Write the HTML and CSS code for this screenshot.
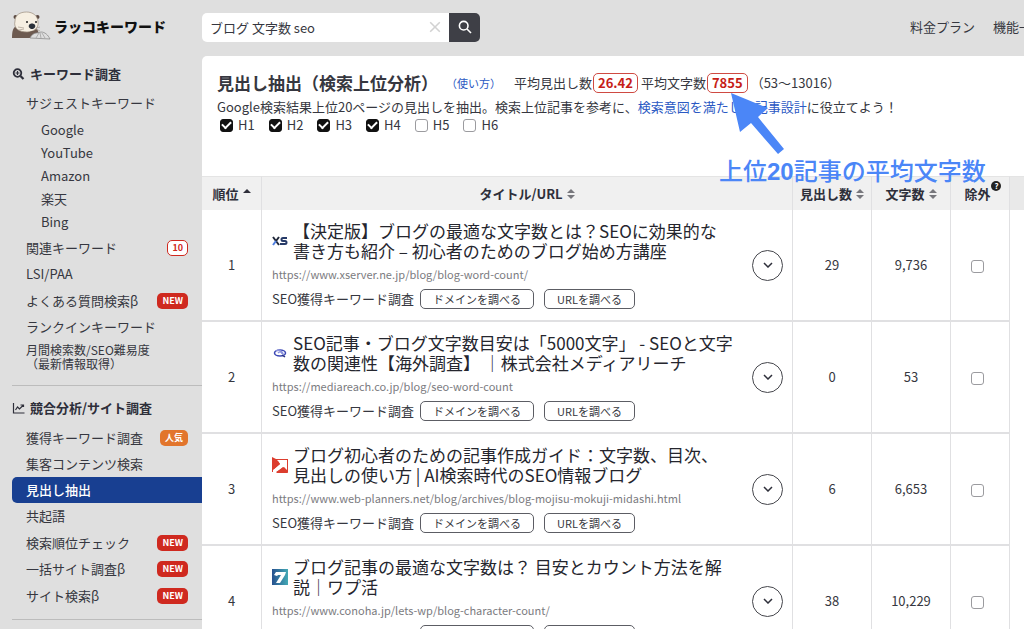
FILE: index.html
```html
<!DOCTYPE html>
<html lang="ja">
<head>
    <meta charset="UTF-8">
    <meta name="viewport" content="width=device-width, initial-scale=1.0">
    <title>見出し抽出 | ラッコキーワード</title>
    <link rel="stylesheet" href="styles.css">
</head>
<body>
    <header class="header">
        <a href="#" class="logo">
            <svg class="logo-icon" viewBox="0 0 40 30" aria-hidden="true">
                <path d="M1 27c0-7 1-11 5-12l18 1c3 2 5 8 4 11z" fill="#6d5a50"/>
                <circle cx="4.500" cy="6" r="2" fill="#5b4a42"/>
                <circle cx="26.500" cy="6" r="2" fill="#5b4a42"/>
                <path d="M4 10C4 4 9 1 15.500 1S27 5 27 11c1 6-4 10-11 10S2 18 4 10z" fill="#f6efe2" stroke="#9b8c7d" stroke-width=".7"/>
                <circle cx="16" cy="11" r="1" fill="#222"/>
                <circle cx="25" cy="11" r="1" fill="#222"/>
                <path d="M18 14c1-2 5-2 6 0s-1 4-3 4-4-2-3-4z" fill="#2b3038"/>
                <path d="M7 16l6 1M8 19l5-1M25 17l4-1M25 18l4 2" stroke="#a99c90" stroke-width=".7"/>
                <path d="M17 22c4-3 7-2 9-1l-2 4-5 1z" fill="#6d5a50"/>
                <path d="M19 27c2-4 5-5 7-5l4-1c4 0 7 3 9 7z" fill="#dedede" stroke="#8d8d8d" stroke-width=".8"/>
                <path d="M25 27l3-5M30 27l-1-5M34 27l-3-5" stroke="#999" stroke-width=".7"/>
            </svg>
            <span>ラッコキーワード</span>
        </a>
        <form class="search">
            <div class="search-box">
                <input type="text" class="search-input" value="ブログ 文字数 seo" aria-label="キーワード">
                <button type="reset" class="search-clear" aria-label="クリア">
                    <svg viewBox="0 0 10 10"><path d="M1 1l8 8M9 1L1 9" stroke="#d2d2d2" stroke-width="1.300"/></svg>
                </button>
            </div>
            <button type="submit" class="search-button" aria-label="検索">
                <svg viewBox="0 0 14 14" fill="none" stroke="#fff" stroke-width="1.600"><circle cx="5.700" cy="5.700" r="4.300"/><path d="M9 9l4 4"/></svg>
            </button>
        </form>
        <nav class="header-nav">
            <a href="#">料金プラン</a>
            <a href="#">機能一覧</a>
        </nav>
    </header>

    <div class="layout">
        <aside class="sidebar">
            <section class="menu">
                <h2 class="menu-title">
                    <svg viewBox="0 0 12 12" fill="none" stroke="#2e2f3a"><circle cx="5" cy="5" r="3.800" stroke-width="1.800"/><path d="M8 8l3 3" stroke-width="2.200"/><path d="M3 5h4M5 3v4" stroke-width="1.200"/></svg>
                    キーワード調査
                </h2>
                <ul>
                    <li>
                        <a href="#" class="item">サジェストキーワード</a>
                        <ul class="submenu">
                            <li><a href="#" class="item sub">Google</a></li>
                            <li><a href="#" class="item sub">YouTube</a></li>
                            <li><a href="#" class="item sub">Amazon</a></li>
                            <li><a href="#" class="item sub">楽天</a></li>
                            <li><a href="#" class="item sub">Bing</a></li>
                        </ul>
                    </li>
                    <li><a href="#" class="item">関連キーワード<span class="badge count">10</span></a></li>
                    <li><a href="#" class="item">LSI/PAA</a></li>
                    <li><a href="#" class="item tall">よくある質問検索β<span class="badge">NEW</span></a></li>
                    <li><a href="#" class="item">ランクインキーワード</a></li>
                    <li><a href="#" class="item small">月間検索数/SEO難易度<br>（最新情報取得）</a></li>
                </ul>
            </section>
            <section class="menu">
                <h2 class="menu-title">
                    <svg viewBox="0 0 12 12" fill="none" stroke="#2e2f3a" stroke-width="1.200"><path d="M1 1v10h11M3 8l2-3 2 2 4-4M8 3h3v2"/></svg>
                    競合分析/サイト調査
                </h2>
                <ul>
                    <li><a href="#" class="item tall">獲得キーワード調査<span class="badge popular">人気</span></a></li>
                    <li><a href="#" class="item">集客コンテンツ検索</a></li>
                    <li><a href="#" class="item active">見出し抽出</a></li>
                    <li><a href="#" class="item">共起語</a></li>
                    <li><a href="#" class="item tall">検索順位チェック<span class="badge">NEW</span></a></li>
                    <li><a href="#" class="item">一括サイト調査β<span class="badge">NEW</span></a></li>
                    <li><a href="#" class="item tall">サイト検索β<span class="badge">NEW</span></a></li>
                </ul>
            </section>
        </aside>

        <main class="main">
            <div class="intro">
                <div class="intro-head">
                    <h1>見出し抽出（検索上位分析）</h1>
                    <a href="#" class="howto">（使い方）</a>
                    <span class="stat">平均見出し数<strong>26.42</strong></span>
                    <span class="stat">平均文字数<strong>7855</strong></span>
                    <span class="range">（53〜13016）</span>
                </div>
                <p class="lead">Google検索結果上位20ページの見出しを抽出。検索上位記事を参考に、<a href="#">検索意図を満たした記事設計</a>に役立てよう！</p>
                <div class="filters">
                    <label><input type="checkbox" checked>H1</label>
                    <label><input type="checkbox" checked>H2</label>
                    <label><input type="checkbox" checked>H3</label>
                    <label><input type="checkbox" checked>H4</label>
                    <label><input type="checkbox">H5</label>
                    <label><input type="checkbox">H6</label>
                </div>
                <!-- Callout over the average character count -->
                <div class="callout">
                    <svg class="callout-arrow" viewBox="0 0 56 64" aria-hidden="true"><path d="M0 0L37 15 27 24 53 56 47 61 20 30 9 39z" fill="#4b86f7"/></svg>
                    <span class="callout-text">上位<b>20</b>記事の平均文字数</span>
                </div>
            </div>

            <table class="results">
                <thead>
                    <tr>
                        <th class="col-rank">順位<svg class="sort" viewBox="0 0 8 12"><path d="M0 5l4-4 4 4z" fill="#2e2f3a"/></svg></th>
                        <th>タイトル/URL<svg class="sort" viewBox="0 0 8 12"><path d="M0 5l4-4 4 4zM0 7l4 4 4-4z" fill="#77777c"/></svg></th>
                        <th class="col-num">見出し数<svg class="sort" viewBox="0 0 8 12"><path d="M0 5l4-4 4 4zM0 7l4 4 4-4z" fill="#77777c"/></svg></th>
                        <th class="col-num">文字数<svg class="sort" viewBox="0 0 8 12"><path d="M0 5l4-4 4 4zM0 7l4 4 4-4z" fill="#77777c"/></svg></th>
                        <th class="col-check"><span class="exclude">除外<span class="help">?</span></span></th>
                        <th class="col-end"></th>
                    </tr>
                </thead>
                <tbody>
                    <tr>
                        <td>1</td>
                        <td>
                            <div class="entry">
                                <div class="entry-body">
                                    <div class="entry-title">
                                        <svg class="favicon" viewBox="0 0 16 16"><path d="M1 4l6 8M7 4l-3 4" stroke="#20283a" stroke-width="2"/><path d="M4 8l-3 4" stroke="#4f7fe0" stroke-width="2"/><path d="M15 5h-4c-2 0-2 3 0 3h2c2 0 2 3 0 3H8" stroke="#263a68" stroke-width="2" fill="none"/></svg>
                                        <a href="#">【決定版】ブログの最適な文字数とは？SEOに効果的な<br>書き方も紹介 – 初心者のためのブログ始め方講座</a>
                                    </div>
                                    <div class="entry-url">https://www.xserver.ne.jp/blog/blog-word-count/</div>
                                    <div class="entry-actions"><span>SEO獲得キーワード調査</span><button type="button">ドメインを調べる</button><button type="button">URLを調べる</button></div>
                                </div>
                                <button type="button" class="expand" aria-label="開く"><svg viewBox="0 0 10 6"><path d="M1 1l4 4 4-4" fill="none" stroke="#2e2f3a" stroke-width="1.500"/></svg></button>
                            </div>
                        </td>
                        <td>29</td>
                        <td>9,736</td>
                        <td class="col-check"><input type="checkbox" aria-label="除外"></td>
                        <td class="col-end"></td>
                    </tr>
                    <tr>
                        <td>2</td>
                        <td>
                            <div class="entry">
                                <div class="entry-body">
                                    <div class="entry-title">
                                        <svg class="favicon" viewBox="0 0 16 16" fill="none"><ellipse cx="8" cy="8" rx="5.500" ry="3" stroke="#3d49b5" stroke-width="1.600"/><path d="M4 6c3-2 7 0 8 5M6 8c2-2 4-1 4 1" stroke="#8c93dd" stroke-width="1.400"/><path d="M10 10l3 2" stroke="#27307e" stroke-width="1.500"/></svg>
                                        <a href="#">SEO記事・ブログ文字数目安は「5000文字」 - SEOと文字<br>数の関連性【海外調査】 ｜株式会社メディアリーチ</a>
                                    </div>
                                    <div class="entry-url">https://mediareach.co.jp/blog/seo-word-count</div>
                                    <div class="entry-actions"><span>SEO獲得キーワード調査</span><button type="button">ドメインを調べる</button><button type="button">URLを調べる</button></div>
                                </div>
                                <button type="button" class="expand" aria-label="開く"><svg viewBox="0 0 10 6"><path d="M1 1l4 4 4-4" fill="none" stroke="#2e2f3a" stroke-width="1.500"/></svg></button>
                            </div>
                        </td>
                        <td>0</td>
                        <td>53</td>
                        <td class="col-check"><input type="checkbox" aria-label="除外"></td>
                        <td class="col-end"></td>
                    </tr>
                    <tr>
                        <td>3</td>
                        <td>
                            <div class="entry">
                                <div class="entry-body">
                                    <div class="entry-title">
                                        <svg class="favicon" viewBox="0 0 16 16"><path d="M0 0l4 2h12v14l-3-1H0z" fill="#dc3d2e"/><path d="M5 3h10v10l-3-3-8 5H1v-2l7-6z" fill="#fff"/><path d="M0 1l6 3 2 3-6 5H0zM6 14l5-4 4 4v2H4z" fill="#dc3d2e"/></svg>
                                        <a href="#">ブログ初心者のための記事作成ガイド：文字数、目次、<br>見出しの使い方 | AI検索時代のSEO情報ブログ</a>
                                    </div>
                                    <div class="entry-url">https://www.web-planners.net/blog/archives/blog-mojisu-mokuji-midashi.html</div>
                                    <div class="entry-actions"><span>SEO獲得キーワード調査</span><button type="button">ドメインを調べる</button><button type="button">URLを調べる</button></div>
                                </div>
                                <button type="button" class="expand" aria-label="開く"><svg viewBox="0 0 10 6"><path d="M1 1l4 4 4-4" fill="none" stroke="#2e2f3a" stroke-width="1.500"/></svg></button>
                            </div>
                        </td>
                        <td>6</td>
                        <td>6,653</td>
                        <td class="col-check"><input type="checkbox" aria-label="除外"></td>
                        <td class="col-end"></td>
                    </tr>
                    <tr>
                        <td>4</td>
                        <td>
                            <div class="entry">
                                <div class="entry-body">
                                    <div class="entry-title">
                                        <svg class="favicon" viewBox="0 0 16 16"><defs><linearGradient id="conoha"><stop offset="0" stop-color="#27518f"/><stop offset="1" stop-color="#43a9b5"/></linearGradient></defs><path d="M0 0h16v16H0z" fill="url(#conoha)"/><path d="M2 6l2-3h10l-1 3-5 8H4l5-8H6L5 7z" fill="#fff"/></svg>
                                        <a href="#">ブログ記事の最適な文字数は？ 目安とカウント方法を解<br>説｜ワプ活</a>
                                    </div>
                                    <div class="entry-url">https://www.conoha.jp/lets-wp/blog-character-count/</div>
                                    <div class="entry-actions"><span>SEO獲得キーワード調査</span><button type="button">ドメインを調べる</button><button type="button">URLを調べる</button></div>
                                </div>
                                <button type="button" class="expand" aria-label="開く"><svg viewBox="0 0 10 6"><path d="M1 1l4 4 4-4" fill="none" stroke="#2e2f3a" stroke-width="1.500"/></svg></button>
                            </div>
                        </td>
                        <td>38</td>
                        <td>10,229</td>
                        <td class="col-check"><input type="checkbox" aria-label="除外"></td>
                        <td class="col-end"></td>
                    </tr>
                </tbody>
            </table>
        </main>
    </div>
</body>
</html>
```
FILE: styles.css
```css
* {
    box-sizing: border-box;
}

body {
    margin: 0;
    background-color: #dfdfdf;
    color: #363740;
    font-family: "Noto Sans CJK JP", sans-serif;
    font-size: 13px;
    line-height: 18px;
    overflow-x: hidden;
}

h1, h2, p, ul {
    margin: 0;
    padding: 0;
}

ul {
    list-style: none;
}

a {
    color: inherit;
    text-decoration: none;
}

button, input {
    font-family: inherit;
    color: inherit;
    margin: 0;
    padding: 0;
    border: none;
}

button {
    cursor: pointer;
}

svg {
    display: block;
    flex-shrink: 0;
}

/* Header */
.header {
    display: flex;
    align-items: center;
    height: 56px;
    padding-bottom: 2px;
    white-space: nowrap;
    overflow: hidden;
}

.logo {
    display: flex;
    align-items: center;
    gap: 3px;
    width: 202px;
    padding-left: 11px;
    padding-bottom: 2px;
    color: #111;
    font-size: 14px;
    font-weight: 900;
}

.logo-icon {
    width: 40px;
    height: 30px;
}

.search {
    display: flex;
    height: 29px;
    border-radius: 5px;
    overflow: hidden;
}

.search-box {
    display: flex;
    align-items: center;
    width: 247px;
    padding: 0 8px;
    background-color: #fff;
}

.search-input {
    flex: 1;
    min-width: 0;
    font-size: 13px;
    background: none;
    outline: none;
}

.search-clear {
    background: none;
}

.search-clear svg {
    width: 12px;
    height: 12px;
}

.search-button {
    display: flex;
    align-items: center;
    justify-content: center;
    width: 31px;
    background-color: #3e3f46;
}

.search-button svg {
    width: 14px;
    height: 14px;
}

.header-nav {
    display: flex;
    gap: 18px;
    margin-left: auto;
    margin-right: -21px;
}

/* Sidebar */
.layout {
    display: flex;
    align-items: flex-start;
}

.sidebar {
    flex: 0 0 202px;
    padding-left: 12px;
    white-space: nowrap;
}

.menu {
    padding: 9px 0 14px;
    border-bottom: 1px solid #bcbcbc;
}

.menu + .menu {
    padding: 13px 0 10px;
}

.menu-title {
    display: flex;
    align-items: center;
    gap: 5px;
    margin-bottom: 7px;
    font-size: 13px;
    line-height: 18px;
    color: #2e2f3a;
}

.menu-title svg {
    width: 13px;
    height: 12px;
}

.submenu {
    padding: 2px 0;
}

.item {
    display: flex;
    align-items: center;
    height: 26px;
    padding: 0 14px;
}

.item.tall {
    height: 27px;
}

.item.sub {
    height: 23px;
    padding-left: 29px;
}

.item.small {
    height: auto;
    padding-top: 3px;
    font-size: 12px;
    line-height: 14px;
}

.item.active {
    border-radius: 5px 0 0 5px;
    background-color: #183f91;
    color: #fff;
    font-weight: 500;
}

.badge {
    margin-left: auto;
    padding: 0 5px;
    border-radius: 5px;
    background-color: #cf291f;
    color: #fff;
    font-size: 9px;
    font-weight: 700;
    line-height: 16px;
}

.badge.count {
    border: 1px solid #cf291f;
    padding: 0 4px;
    background-color: #fff;
    color: #cf291f;
    line-height: 14px;
}

.badge.popular {
    background-color: #e2752c;
}

/* Main panel */
.main {
    flex: 1;
    min-width: 0;
    border-top-left-radius: 5px;
    background-color: #fff;
}

.intro {
    position: relative;
    height: 120px;
    padding: 15px 15px 0;
    white-space: nowrap;
}

.intro-head {
    display: flex;
    align-items: center;
    height: 24px;
}

.intro h1 {
    font-size: 17px;
    line-height: 24px;
}

.howto {
    margin: 0 13px 0 8px;
    font-size: 11px;
}

.howto, .lead a {
    color: #2b59c3;
}

.stat {
    margin-right: 3px;
}

.stat strong {
    display: inline-block;
    margin-left: 1px;
    padding: 0 4px;
    border: 1px solid #cf4a42;
    border-radius: 5px;
    color: #c61d17;
    font-size: 13px;
}

.lead {
    margin-top: 3px;
}

.filters {
    display: flex;
    gap: 14px;
    padding-left: 3px;
}

.filters label {
    display: flex;
    align-items: center;
    gap: 5px;
}

input[type="checkbox"] {
    display: inline-flex;
    align-items: center;
    justify-content: center;
    width: 13px;
    height: 13px;
    border: 1px solid #9b9b9f;
    border-radius: 3px;
    background-color: #fff;
    appearance: none;
    vertical-align: middle;
}

input[type="checkbox"]:checked {
    border-color: #111;
    background-color: #111;
}

input[type="checkbox"]:checked::after {
    content: "";
    width: 7px;
    height: 4px;
    margin-bottom: 2px;
    border: solid #fff;
    border-width: 0 0 2px 2px;
    transform: rotate(-45deg);
}

.callout-arrow {
    position: absolute;
    top: 37px;
    left: 529px;
    width: 56px;
    height: 64px;
}

.callout-text {
    position: absolute;
    top: 96px;
    left: 517px;
    color: #4b86f7;
    font-size: 24px;
    font-weight: 500;
    line-height: 36px;
}

.callout-text b {
    font-family: "Liberation Sans", sans-serif;
}

/* Results table */
.results {
    width: 100%;
    table-layout: fixed;
    border-spacing: 0;
    text-align: center;
}

.results th {
    height: 34px;
    padding: 0;
    border-top: 1px solid #e4e4e4;
    border-right: 1px solid #e0e0e2;
    background-color: #f0f0f0;
    color: #2e2f3a;
    white-space: nowrap;
}

.results td {
    height: 112px;
    padding: 0;
    border-right: 1px solid #e0e0e2;
    border-bottom: 2px solid #e0e0e2;
}

.results .col-end {
    width: 14px;
    border-right: none;
    border-bottom: none;
}

.results th.col-end {
    background-color: #e9e9e9;
}

.col-rank {
    width: 60px;
}

.col-num {
    width: 79px;
}

.results .col-check {
    width: 59px;
    padding-right: 5px;
}

.sort {
    display: inline-block;
    width: 8px;
    height: 12px;
    margin-left: 4px;
    vertical-align: -1px;
}

.exclude {
    position: relative;
}

.help {
    position: absolute;
    top: -3px;
    left: 27px;
    width: 10px;
    height: 10px;
    border-radius: 50%;
    background-color: #222;
    color: #fff;
    font-size: 8px;
    line-height: 10px;
}

.entry {
    display: flex;
    align-items: center;
    padding: 0 9px 0 10px;
    text-align: left;
    white-space: nowrap;
}

.entry-body {
    flex: 1;
    min-width: 0;
}

.entry-title {
    display: flex;
    align-items: center;
    gap: 5px;
    color: #25262e;
    font-size: 17px;
    line-height: 20px;
}

.favicon {
    width: 16px;
    height: 16px;
}

.entry-url {
    margin: 4px 0 6px;
    color: #7b7b80;
    font-size: 11px;
}

.entry-actions {
    display: flex;
    align-items: center;
    gap: 10px;
}

.entry-actions span {
    margin-right: -4px;
}

.entry-actions button {
    padding: 0 12px;
    border: 1px solid #5c5d64;
    border-radius: 5px;
    background-color: #fff;
    font-size: 11px;
    line-height: 18px;
}

.expand {
    display: flex;
    align-items: center;
    justify-content: center;
    width: 31px;
    height: 31px;
    border: 1px solid #45464c;
    border-radius: 50%;
    background-color: #fff;
}

.expand svg {
    width: 10px;
    height: 6px;
}
```
